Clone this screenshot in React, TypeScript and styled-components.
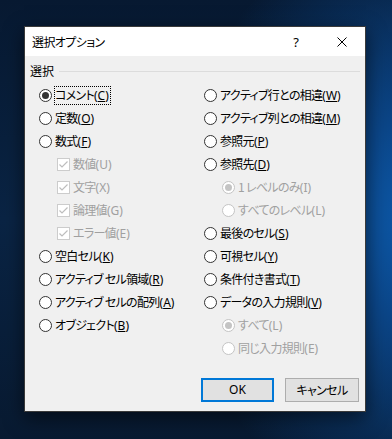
import React from 'react';
import styled, { createGlobalStyle, css } from 'styled-components';

const Global = createGlobalStyle`
  html, body { margin: 0; padding: 0; }
  body {
    width: 392px;
    height: 439px;
    overflow: hidden;
    background:
      radial-gradient(ellipse 250px 300px at 108% 50%, #0d5cae 0%, #0b4587 35%, rgba(10,45,90,0) 100%),
      linear-gradient(180deg, #071931 0%, #0a2444 50%, #081a31 100%);
    font-family: "Noto Sans CJK JP", "Noto Sans", sans-serif;
    font-feature-settings: "palt" 1;
    color: #000;
  }
`;

const Desktop = styled.div`
  width: 392px;
  height: 439px;
  box-sizing: border-box;
  padding: 26px 0 0 24px;
`;

const Dialog = styled.div`
  width: 342px;
  height: 386px;
  box-sizing: border-box;
  border: 1px solid #3a3a3a;
  background: #f0f0f0;
  display: flex;
  flex-direction: column;
  box-shadow: 0 6px 18px rgba(0, 0, 0, 0.55);
`;

const TitleBar = styled.div`
  height: 29px;
  background: #fff;
  display: flex;
  align-items: center;
  padding-left: 7px;
  font-size: 12px;
`;

const Title = styled.div`
  flex: 1;
  line-height: 16px;
  letter-spacing: -0.6px;
`;

const TitleButton = styled.div`
  width: 46px;
  height: 29px;
  display: flex;
  align-items: center;
  justify-content: center;
  font-family: "Noto Sans", sans-serif;
  font-size: 13px;
`;

const Body = styled.div`
  flex: 1;
  display: flex;
  flex-direction: column;
  padding: 7px 5px 9px 5px;
`;

const GroupHeader = styled.div`
  display: flex;
  align-items: center;
  height: 16px;
  gap: 5px;
  font-size: 12px;
  line-height: 16px;
`;

const Rule = styled.div`
  flex: 1;
  height: 1px;
  background: #dcdcdc;
`;

const Columns = styled.div`
  display: grid;
  grid-template-columns: 165px 1fr;
  margin: 5px 0 0 9px;
`;

const Column = styled.div`
  display: flex;
  flex-direction: column;
`;

const Row = styled.div<{ $sub?: boolean; $disabled?: boolean }>`
  height: 23px;
  display: flex;
  align-items: center;
  gap: 2px;
  padding-left: ${(p) => (p.$sub ? 18 : 0)}px;
  font-size: 12px;
  color: ${(p) => (p.$disabled ? '#a0a0a0' : '#000')};
  white-space: nowrap;
`;

const Label = styled.span<{ $focus?: boolean }>`
  line-height: 16px;
  padding-right: 1px;
  border: 1px dotted ${(p) => (p.$focus ? '#000' : 'transparent')};
`;

const Jp = styled.span`
  letter-spacing: -0.7px;
`;

const Access = styled.span`
  font-family: "Noto Sans", sans-serif;
  font-size: 12px;
`;

const Key = styled.span`
  text-decoration: underline;
  text-underline-offset: 1px;
`;

const RadioCircle = styled.span<{ $checked?: boolean; $disabled?: boolean }>`
  position: relative;
  width: 13px;
  height: 13px;
  box-sizing: border-box;
  border-radius: 50%;
  flex: none;
  background: #fff;
  border: 1px solid ${(p) => (p.$disabled ? '#c4c4c4' : '#333')};
  ${(p) =>
    p.$checked &&
    css`
      &::after {
        content: '';
        position: absolute;
        left: 2px;
        top: 2px;
        width: 7px;
        height: 7px;
        border-radius: 50%;
        background: ${p.$disabled ? '#c4c4c4' : '#333'};
      }
    `}
`;

const CheckSvg = styled.svg`
  flex: none;
  display: block;
`;

const Buttons = styled.div`
  margin-top: auto;
  display: flex;
  justify-content: flex-end;
  gap: 11px;
  padding-right: 1px;
`;

const Button = styled.div<{ $default?: boolean; $w: number }>`
  width: ${(p) => p.$w}px;
  height: 24px;
  box-sizing: border-box;
  background: #e1e1e1;
  border: ${(p) => (p.$default ? '2px solid #0078d7' : '1px solid #adadad')};
  display: flex;
  align-items: center;
  justify-content: center;
  font-size: 12px;
  line-height: 16px;
`;

const ButtonText = styled.span<{ $latin?: boolean }>`
  font-family: ${(p) => (p.$latin ? '"Noto Sans", sans-serif' : 'inherit')};
  letter-spacing: ${(p) => (p.$latin ? 0 : -0.6)}px;
`;

type Item = {
  text: string;
  k?: string;
  kind: 'radio' | 'check';
  checked?: boolean;
  disabled?: boolean;
  sub?: boolean;
  focus?: boolean;
};

const left: Item[] = [
  { text: 'コメント', k: 'C', kind: 'radio', checked: true, focus: true },
  { text: '定数', k: 'O', kind: 'radio' },
  { text: '数式', k: 'F', kind: 'radio' },
  { text: '数値', k: 'U', kind: 'check', checked: true, disabled: true, sub: true },
  { text: '文字', k: 'X', kind: 'check', checked: true, disabled: true, sub: true },
  { text: '論理値', k: 'G', kind: 'check', checked: true, disabled: true, sub: true },
  { text: 'エラー値', k: 'E', kind: 'check', checked: true, disabled: true, sub: true },
  { text: '空白セル', k: 'K', kind: 'radio' },
  { text: 'アクティブ セル領域', k: 'R', kind: 'radio' },
  { text: 'アクティブ セルの配列', k: 'A', kind: 'radio' },
  { text: 'オブジェクト', k: 'B', kind: 'radio' },
];

const right: Item[] = [
  { text: 'アクティブ行との相違', k: 'W', kind: 'radio' },
  { text: 'アクティブ列との相違', k: 'M', kind: 'radio' },
  { text: '参照元', k: 'P', kind: 'radio' },
  { text: '参照先', k: 'D', kind: 'radio' },
  { text: '1 レベルのみ', k: 'I', kind: 'radio', checked: true, disabled: true, sub: true },
  { text: 'すべてのレベル', k: 'L', kind: 'radio', disabled: true, sub: true },
  { text: '最後のセル', k: 'S', kind: 'radio' },
  { text: '可視セル', k: 'Y', kind: 'radio' },
  { text: '条件付き書式', k: 'T', kind: 'radio' },
  { text: 'データの入力規則', k: 'V', kind: 'radio' },
  { text: 'すべて', k: 'L', kind: 'radio', checked: true, disabled: true, sub: true },
  { text: '同じ入力規則', k: 'E', kind: 'radio', disabled: true, sub: true },
];

const Check = () => (
  <CheckSvg width="13" height="13" viewBox="0 0 13 13">
    <rect x="0.5" y="0.5" width="12" height="12" fill="#fff" stroke="#cccccc" />
    <polyline points="2.5,6.5 5,9 10.5,3.5" fill="none" stroke="#bdbdbd" strokeWidth="1.2" />
  </CheckSvg>
);

const Option = ({ item }: { item: Item }) => (
  <Row $sub={item.sub} $disabled={item.disabled}>
    {item.kind === 'radio' ? (
      <RadioCircle $checked={item.checked} $disabled={item.disabled} />
    ) : (
      <Check />
    )}
    <Label $focus={item.focus}>
      <Jp>{item.text}</Jp>
      <Access>
        ({item.disabled ? item.k : <Key>{item.k}</Key>})
      </Access>
    </Label>
  </Row>
);

export default function App() {
  return (
    <>
      <Global />
      <Desktop>
        <Dialog>
          <TitleBar>
            <Title>選択オプション</Title>
            <TitleButton>?</TitleButton>
            <TitleButton>
              <svg width="10" height="10" viewBox="0 0 10 10">
                <path d="M0.5 0.5 L9.5 9.5 M9.5 0.5 L0.5 9.5" stroke="#000" strokeWidth="1" />
              </svg>
            </TitleButton>
          </TitleBar>
          <Body>
            <GroupHeader>
              <span>選択</span>
              <Rule />
            </GroupHeader>
            <Columns>
              <Column>
                {left.map((it, i) => (
                  <Option key={i} item={it} />
                ))}
              </Column>
              <Column>
                {right.map((it, i) => (
                  <Option key={i} item={it} />
                ))}
              </Column>
            </Columns>
            <Buttons>
              <Button $default $w={73}>
                <ButtonText $latin>OK</ButtonText>
              </Button>
              <Button $w={74}>
                <ButtonText>キャンセル</ButtonText>
              </Button>
            </Buttons>
          </Body>
        </Dialog>
      </Desktop>
    </>
  );
}
